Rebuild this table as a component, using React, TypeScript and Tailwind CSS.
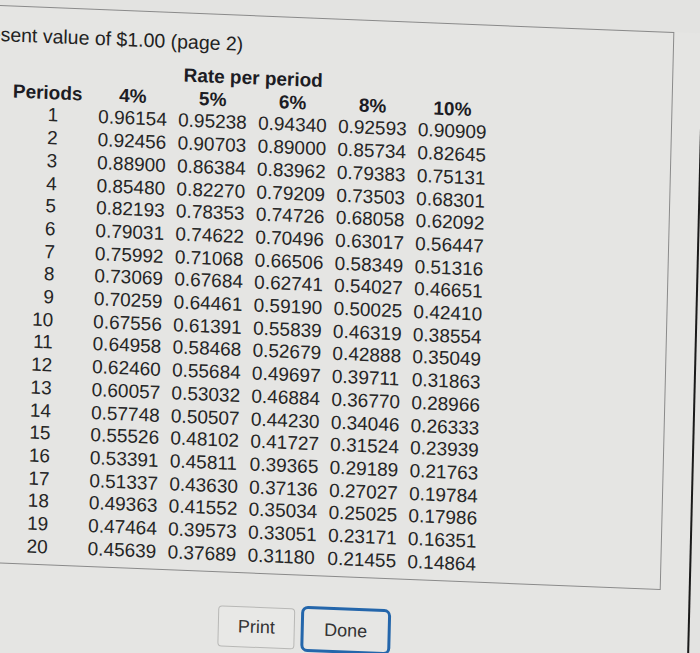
import React from 'react';

// 现值系数表（第2页）
const rates = ['4%', '5%', '6%', '8%', '10%'];

const rows: string[][] = [
  ['0.96154', '0.95238', '0.94340', '0.92593', '0.90909'],
  ['0.92456', '0.90703', '0.89000', '0.85734', '0.82645'],
  ['0.88900', '0.86384', '0.83962', '0.79383', '0.75131'],
  ['0.85480', '0.82270', '0.79209', '0.73503', '0.68301'],
  ['0.82193', '0.78353', '0.74726', '0.68058', '0.62092'],
  ['0.79031', '0.74622', '0.70496', '0.63017', '0.56447'],
  ['0.75992', '0.71068', '0.66506', '0.58349', '0.51316'],
  ['0.73069', '0.67684', '0.62741', '0.54027', '0.46651'],
  ['0.70259', '0.64461', '0.59190', '0.50025', '0.42410'],
  ['0.67556', '0.61391', '0.55839', '0.46319', '0.38554'],
  ['0.64958', '0.58468', '0.52679', '0.42888', '0.35049'],
  ['0.62460', '0.55684', '0.49697', '0.39711', '0.31863'],
  ['0.60057', '0.53032', '0.46884', '0.36770', '0.28966'],
  ['0.57748', '0.50507', '0.44230', '0.34046', '0.26333'],
  ['0.55526', '0.48102', '0.41727', '0.31524', '0.23939'],
  ['0.53391', '0.45811', '0.39365', '0.29189', '0.21763'],
  ['0.51337', '0.43630', '0.37136', '0.27027', '0.19784'],
  ['0.49363', '0.41552', '0.35034', '0.25025', '0.17986'],
  ['0.47464', '0.39573', '0.33051', '0.23171', '0.16351'],
  ['0.45639', '0.37689', '0.31180', '0.21455', '0.14864'],
];

const App: React.FC = () => {
  return (
    <div className="w-[700px] h-[653px] overflow-hidden bg-[#e3e3e1] font-['Liberation_Sans',Arial,sans-serif] text-[#262626]">
      {/* 照片略有倾斜 */}
      <div className="w-[705px] h-[700px] origin-top-left skew-y-[2.3deg] -skew-x-[1.4deg] border-r-2 border-[#1a1a1a] bg-[#e5e5e3]">
        {/* 表格框 */}
        <div className="-ml-[40px] mt-[5px] w-[715px] h-[558px] border border-[#8a8a8a] pl-[40px]">
          <div className="-ml-[30px] mt-[17px] text-[19.5px] leading-[22px] whitespace-nowrap text-[#222]">
            Present value of $1.00 (page 2)
          </div>

          <div className="mt-[12px] grid grid-cols-[88px_repeat(5,68px)] gap-x-[12px] text-[19px] leading-[22.7px]">
            <div className="col-start-2 col-span-4 text-center font-bold text-[#1c1c24]">Rate per period</div>

            <div className="col-start-1 pl-[14px] font-bold text-[#1c1c24]">Periods</div>
            {rates.map((r) => (
              <div key={r} className="text-center font-bold text-[#1c1c24]">{r}</div>
            ))}

            {rows.map((vals, i) => (
              <React.Fragment key={i}>
                <div className="pr-[28px] text-right">{i + 1}</div>
                {vals.map((v, j) => (
                  <div key={j}>{v}</div>
                ))}
              </React.Fragment>
            ))}
          </div>
        </div>

        {/* 按钮 */}
        <div className="mt-[30px] pl-[233px] flex items-center gap-[6px]">
          <button className="w-[77px] h-[41px] border border-[#b8b8b6] rounded-[4px] bg-[#e8e8e6] text-[18px] text-[#333]">
            Print
          </button>
          <button className="w-[90px] h-[46px] border-[3px] border-[#2466ab] rounded-[7px] bg-[#e6e6e4] text-[18px] text-[#333]">
            Done
          </button>
        </div>
      </div>
    </div>
  );
};

export default App;
